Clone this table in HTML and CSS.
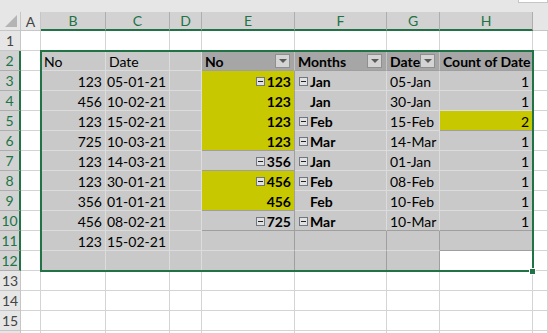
FILE: index.html
```html
<!DOCTYPE html>
<html>
<head>
<meta charset="utf-8">
<link rel="stylesheet" href="styles.css">
</head>
<body>
<div class="sheet">
  <div class="topstrip"><div class="fbox"></div></div>
  <div class="grid">
    <!-- column header row -->
    <div class="ch corner"><span class="tri"></span></div>
    <div class="ch">A</div>
    <div class="ch on">B</div>
    <div class="ch on">C</div>
    <div class="ch on">D</div>
    <div class="ch on">E</div>
    <div class="ch on">F</div>
    <div class="ch on">G</div>
    <div class="ch on">H</div>
    <div class="ch last"></div>

    <!-- row 1 -->
    <div class="rh">1</div>
    <div class="c"></div><div class="c"></div><div class="c"></div><div class="c"></div><div class="c"></div><div class="c"></div><div class="c"></div><div class="c"></div><div class="c"></div>

    <!-- row 2 -->
    <div class="rh on">2</div>
    <div class="c"></div>
    <div class="c g">No</div>
    <div class="c g">Date</div>
    <div class="c g"></div>
    <div class="c ph"><span>No</span><span class="dd"></span></div>
    <div class="c ph"><span>Months</span><span class="dd"></span></div>
    <div class="c ph"><span>Date</span><span class="dd"></span></div>
    <div class="c ph"><span>Count of Date</span></div>
    <div class="c"></div>

    <!-- row 3 -->
    <div class="rh on">3</div>
    <div class="c"></div>
    <div class="c g r">123</div>
    <div class="c g r">05-01-21</div>
    <div class="c g"></div>
    <div class="c y pe r b nb"><span class="mx"></span>123</div>
    <div class="c g pf b"><span class="mx"></span>Jan</div>
    <div class="c g pg">05-Jan</div>
    <div class="c g ph2 r">1</div>
    <div class="c"></div>

    <!-- row 4 -->
    <div class="rh on">4</div>
    <div class="c"></div>
    <div class="c g r">456</div>
    <div class="c g r">10-02-21</div>
    <div class="c g"></div>
    <div class="c y pe r b nb">123</div>
    <div class="c g pf b"><span class="mx blank"></span>Jan</div>
    <div class="c g pg">30-Jan</div>
    <div class="c g ph2 r">1</div>
    <div class="c"></div>

    <!-- row 5 -->
    <div class="rh on">5</div>
    <div class="c"></div>
    <div class="c g r">123</div>
    <div class="c g r">15-02-21</div>
    <div class="c g"></div>
    <div class="c y pe r b nb">123</div>
    <div class="c g pf b"><span class="mx"></span>Feb</div>
    <div class="c g pg">15-Feb</div>
    <div class="c y ph2 r">2</div>
    <div class="c"></div>

    <!-- row 6 -->
    <div class="rh on">6</div>
    <div class="c"></div>
    <div class="c g r">725</div>
    <div class="c g r">10-03-21</div>
    <div class="c g"></div>
    <div class="c y pe r b">123</div>
    <div class="c g pf b"><span class="mx"></span>Mar</div>
    <div class="c g pg">14-Mar</div>
    <div class="c g ph2 r">1</div>
    <div class="c"></div>

    <!-- row 7 -->
    <div class="rh on">7</div>
    <div class="c"></div>
    <div class="c g r">123</div>
    <div class="c g r">14-03-21</div>
    <div class="c g"></div>
    <div class="c g pe r b"><span class="mx"></span>356</div>
    <div class="c g pf b"><span class="mx"></span>Jan</div>
    <div class="c g pg">01-Jan</div>
    <div class="c g ph2 r">1</div>
    <div class="c"></div>

    <!-- row 8 -->
    <div class="rh on">8</div>
    <div class="c"></div>
    <div class="c g r">123</div>
    <div class="c g r">30-01-21</div>
    <div class="c g"></div>
    <div class="c y pe r b nb"><span class="mx"></span>456</div>
    <div class="c g pf b"><span class="mx"></span>Feb</div>
    <div class="c g pg">08-Feb</div>
    <div class="c g ph2 r">1</div>
    <div class="c"></div>

    <!-- row 9 -->
    <div class="rh on">9</div>
    <div class="c"></div>
    <div class="c g r">356</div>
    <div class="c g r">01-01-21</div>
    <div class="c g"></div>
    <div class="c y pe r b">456</div>
    <div class="c g pf b"><span class="mx blank"></span>Feb</div>
    <div class="c g pg">10-Feb</div>
    <div class="c g ph2 r">1</div>
    <div class="c"></div>

    <!-- row 10 -->
    <div class="rh on">10</div>
    <div class="c"></div>
    <div class="c g r">456</div>
    <div class="c g r">08-02-21</div>
    <div class="c g"></div>
    <div class="c g pe r b pbot"><span class="mx"></span>725</div>
    <div class="c g pf b pbot"><span class="mx"></span>Mar</div>
    <div class="c g pg pbot">10-Mar</div>
    <div class="c g ph2 r pbot">1</div>
    <div class="c"></div>

    <!-- row 11 -->
    <div class="rh on">11</div>
    <div class="c"></div>
    <div class="c g r">123</div>
    <div class="c g r">15-02-21</div>
    <div class="c g"></div>
    <div class="c g dk"></div>
    <div class="c g dk"></div>
    <div class="c g dk"></div>
    <div class="c g dkb"></div>
    <div class="c"></div>

    <!-- row 12 -->
    <div class="rh on">12</div>
    <div class="c"></div>
    <div class="c g"></div>
    <div class="c g"></div>
    <div class="c g"></div>
    <div class="c g dk"></div>
    <div class="c g dk"></div>
    <div class="c g dk"></div>
    <div class="c"></div>
    <div class="c"></div>

    <!-- rows 13-16 -->
    <div class="rh">13</div>
    <div class="c"></div><div class="c"></div><div class="c"></div><div class="c"></div><div class="c"></div><div class="c"></div><div class="c"></div><div class="c"></div><div class="c"></div>
    <div class="rh">14</div>
    <div class="c"></div><div class="c"></div><div class="c"></div><div class="c"></div><div class="c"></div><div class="c"></div><div class="c"></div><div class="c"></div><div class="c"></div>
    <div class="rh">15</div>
    <div class="c"></div><div class="c"></div><div class="c"></div><div class="c"></div><div class="c"></div><div class="c"></div><div class="c"></div><div class="c"></div><div class="c"></div>
    <div class="rh"></div>
    <div class="c"></div><div class="c"></div><div class="c"></div><div class="c"></div><div class="c"></div><div class="c"></div><div class="c"></div><div class="c"></div><div class="c"></div>
  </div>
  <div class="selbox"></div>
  <div class="handle"></div>
</div>
</body>
</html>
```

FILE: styles.css
```css
* { box-sizing: border-box; }
html, body { margin: 0; padding: 0; background: #fff; overflow: hidden; }
body { font-family: Lato, "Open Sans", sans-serif; font-size: 14px; color: #000; }

.sheet { position: relative; width: 548px; height: 333px; overflow: hidden; }

.topstrip { height: 12px; background: #e6e6e6; position: relative; }
.fbox { position: absolute; right: 0; top: -1px; width: 30px; height: 4px; background: #fff; border: 1px solid #c6c6c6; }

.grid {
  display: grid;
  grid-template-columns: 21px 20px 65px 64px 32px 93px 92px 53px 93px 1fr;
  grid-template-rows: 19px repeat(16, 20px);
}

.ch {
  background: #e6e6e6;
  border-right: 1px solid #c6c6c6;
  border-bottom: 1px solid #c6c6c6;
  color: #444;
  text-align: center;
  line-height: 19px;
  font-size: 14px;
}
.ch.on { background: #d2d2d2; color: #217346; border-right-color: #aeaeae; border-bottom: 2px solid #217346; line-height: 18px; }
.ch.corner { position: relative; }
.ch.last { border-right: none; background: #e6e6e6; }
.tri {
  position: absolute; right: 3px; bottom: 3px;
  width: 0; height: 0;
  border-left: 12px solid transparent;
  border-bottom: 12px solid #b4b4b4;
}

.rh {
  background: #e6e6e6;
  border-right: 1px solid #c6c6c6;
  border-bottom: 1px solid #c6c6c6;
  color: #444;
  text-align: center;
  line-height: 20px;
  font-size: 14px;
}
.rh.on { background: #d2d2d2; color: #217346; border-right: 2px solid #217346; border-bottom-color: #aeaeae; }

.c {
  border-right: 1px solid #d4d4d4;
  border-bottom: 1px solid #d4d4d4;
  padding: 1px 3px 0;
  line-height: 19px;
  white-space: nowrap;
  overflow: hidden;
  display: flex;
  align-items: center;
}
.r { justify-content: flex-end; }
.b { font-weight: 700; }

.g { background: #c9c9c9; border-color: #dcdcdc; }
.y { background: #c8c800; border-right-color: #9f9f9f; border-bottom-color: #9f9f9f; }
.y.nb { border-bottom-color: #c8c800; }

.ph {
  background: #a6a6a6;
  font-weight: 700;
  border-right-color: #c3c3c3;
  border-bottom-color: #9f9f9f;
  justify-content: space-between;
  padding-right: 4px;
}
.dd {
  width: 15px; height: 14px;
  background: #d4d4d4;
  border: 1px solid #8f8f8f;
  position: relative;
  flex: none;
}
.dd::after {
  content: "";
  position: absolute; left: 3px; top: 4px;
  border-left: 4px solid transparent;
  border-right: 4px solid transparent;
  border-top: 4px solid #5a5a5a;
}

.pe { border-right-color: #9f9f9f; }
.pe.g { border-bottom-color: #9f9f9f; }
.pf { padding-left: 4px; }
.pbot { border-bottom-color: #9f9f9f; }
.dk { border-right-color: #9f9f9f; }
.dkb { border-bottom-color: #9f9f9f; }

.mx {
  display: inline-block;
  width: 9px; height: 9px;
  border: 1px solid #6f7680;
  background: #e0e0e0;
  position: relative;
  margin-right: 2px;
  flex: none;
}
.mx::after {
  content: "";
  position: absolute; left: 1px; top: 3px;
  width: 5px; height: 1px;
  background: #222;
}
.mx.blank { border-color: transparent; background: transparent; }
.mx.blank::after { display: none; }

.selbox {
  position: absolute;
  left: 40px; top: 50px;
  width: 494px; height: 222px;
  border: 2px solid #217346;
  pointer-events: none;
}
.handle {
  position: absolute;
  left: 529px; top: 268px;
  width: 7px; height: 7px;
  background: #217346;
  border: 1px solid #fff;
}
```
